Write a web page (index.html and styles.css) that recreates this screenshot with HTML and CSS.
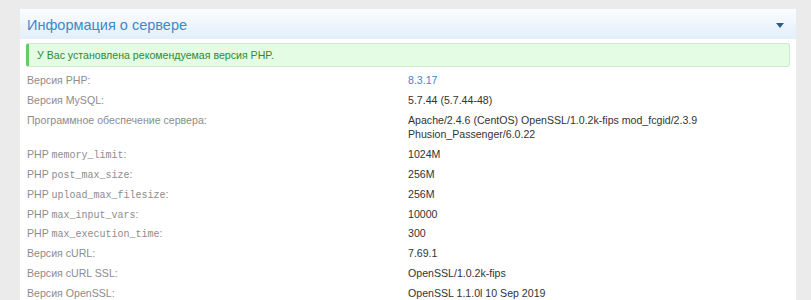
FILE: index.html
```html
<!DOCTYPE html>
<html lang="ru">
<head>
    <meta charset="UTF-8">
    <meta name="viewport" content="width=device-width, initial-scale=1.0">
    <title>Информация о сервере</title>
    <link rel="stylesheet" href="styles.css">
</head>
<body>
    <div class="panel">
        <div class="panel-head">
            <span class="panel-title">Информация о сервере</span>
            <span class="caret"></span>
        </div>
        <div class="panel-body">
            <div class="alert">У Вас установлена рекомендуемая версия PHP.</div>
            <ul class="info">
                <li><span class="label">Версия PHP:</span><span class="value link">8.3.17</span></li>
                <li><span class="label">Версия MySQL:</span><span class="value">5.7.44 (5.7.44-48)</span></li>
                <li><span class="label">Программное обеспечение сервера:</span><span class="value">Apache/2.4.6 (CentOS) OpenSSL/1.0.2k-fips mod_fcgid/2.3.9 Phusion_Passenger/6.0.22</span></li>
                <li><span class="label">PHP <code>memory_limit</code>:</span><span class="value">1024M</span></li>
                <li><span class="label">PHP <code>post_max_size</code>:</span><span class="value">256M</span></li>
                <li><span class="label">PHP <code>upload_max_filesize</code>:</span><span class="value">256M</span></li>
                <li><span class="label">PHP <code>max_input_vars</code>:</span><span class="value">10000</span></li>
                <li><span class="label">PHP <code>max_execution_time</code>:</span><span class="value">300</span></li>
                <li><span class="label">Версия cURL:</span><span class="value">7.69.1</span></li>
                <li><span class="label">Версия cURL SSL:</span><span class="value">OpenSSL/1.0.2k-fips</span></li>
                <li><span class="label">Версия OpenSSL:</span><span class="value">OpenSSL 1.1.0l 10 Sep 2019</span></li>
            </ul>
        </div>
    </div>
</body>
</html>
```

FILE: styles.css
```css
body{
    margin: 0;
    background-color: #ebebeb;
    font-family: "Liberation Sans", Arial, sans-serif;
}
.panel{
    width: 776px;
    margin: 9px 0 0 20px;
    background-color: white;
}
.panel-head{
    height: 30px;
    box-sizing: border-box;
    display: flex;
    align-items: center;
    justify-content: space-between;
    padding: 2px 12px 0 7px;
    background: linear-gradient(#fbfdff, #e2eefa);
}
.panel-title{
    font-size: 14.5px;
    color: #3f88c8;
}
.caret{
    width: 0;
    height: 0;
    border-left: 4px solid transparent;
    border-right: 4px solid transparent;
    border-top: 5px solid #2b5d90;
}
.panel-body{
    padding: 4px 6px 0 6px;
}
.alert{
    height: 24px;
    line-height: 22px;
    box-sizing: border-box;
    padding-left: 8px;
    font-size: 10.6px;
    color: #2f8a33;
    background-color: #e4fbe4;
    border: 1px solid #cdeccd;
    border-left: 3px solid #62cc66;
    border-radius: 3px;
}
.info{
    list-style: none;
    margin: 3px 0 0 0;
    padding: 0;
}
.info li{
    display: grid;
    grid-template-columns: 1fr 1fr;
    padding: 3px 1px 2px 1px;
    font-size: 10.6px;
}
.label,
.value{
    line-height: 14.8px;
}
.label{
    color: #8c8c8c;
}
.label code{
    font-family: "Liberation Mono", monospace;
    font-size: 10px;
    line-height: 1;
}
.value{
    color: #333;
}
.value.link{
    color: #3f88c8;
}
```
